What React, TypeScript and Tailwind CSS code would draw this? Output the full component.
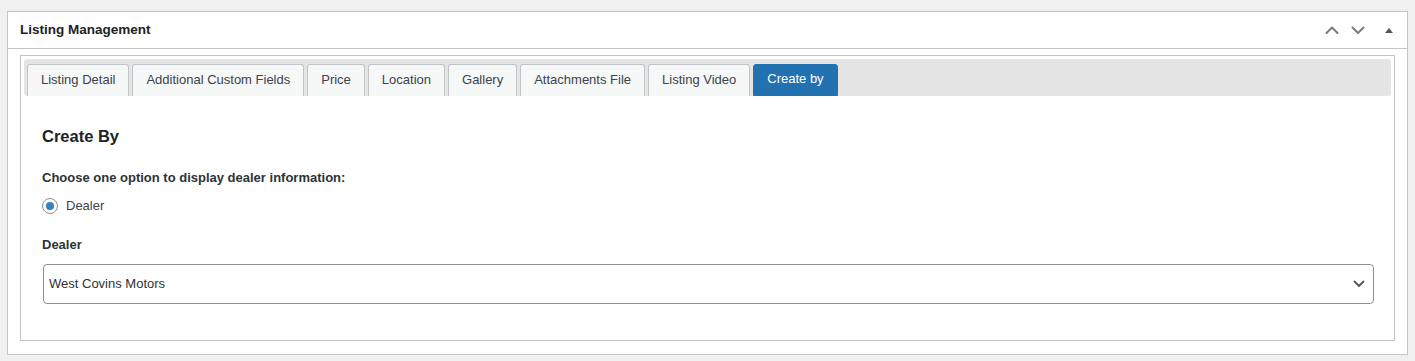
import { useState } from "react"

const tabs = [
    "Listing Detail",
    "Additional Custom Fields",
    "Price",
    "Location",
    "Gallery",
    "Attachments File",
    "Listing Video",
    "Create by",
]

function Chevron({ up }: { readonly up?: boolean }) {
    return (
        <svg width="14" height="10" viewBox="0 0 14 10" fill="none">
            <path
                d={up ? "M1.5 8 L7 2.5 L12.5 8" : "M1.5 2.5 L7 8 L12.5 2.5"}
                stroke="#787c82"
                strokeWidth="2"
                strokeLinecap="round"
                strokeLinejoin="round"
            />
        </svg>
    )
}

export default function App() {
    const [active, setActive] = useState("Create by")

    return (
        <div className="w-[1415px] h-[361px] bg-[#f0f0f1] pt-[11px] px-[7px] font-['Liberation_Sans',Arial,sans-serif] text-[#1d2327]">
            <div className="h-[344px] bg-white border border-[#c3c4c7]">
                <div className="h-[37px] border-b border-[#c3c4c7] flex items-center justify-between pl-[12px] pr-[13px]">
                    <h2 className="text-[13.5px] font-bold text-[#1d2327]">Listing Management</h2>
                    <div className="flex items-center">
                        <button className="w-[26px] flex justify-center"><Chevron up /></button>
                        <button className="w-[26px] flex justify-center"><Chevron /></button>
                        <button className="w-[23px] flex justify-end">
                            <svg width="10" height="8" viewBox="0 0 10 8">
                                <path d="M1 7 L5 2 L9 7 Z" fill="#50575e" />
                            </svg>
                        </button>
                    </div>
                </div>
                <div className="pt-[6px] pl-[12px] pr-[12px]">
                    <div className="h-[286px] border border-[#c3c4c7] p-[3px]">
                        <div className="h-[37px] bg-[#e5e5e5] rounded-[3px] pl-[3px] pt-[5px] flex items-end gap-[3px]">
                            {tabs.map((tab) => {
                                const isActive = tab === active
                                return (
                                    <button
                                        key={tab}
                                        onClick={() => setActive(tab)}
                                        className={
                                            isActive
                                                ? "h-[32px] pb-[2px] px-[13px] text-[13px] rounded-t-[3px] border border-[#2271b1] bg-[#2271b1] text-white"
                                                : "h-[32px] pb-[2px] px-[13px] text-[13px] rounded-t-[3px] border border-b-0 border-[#c3c4c7] bg-[#f6f7f7] text-[#3c434a]"
                                        }
                                    >
                                        {tab}
                                    </button>
                                )
                            })}
                        </div>
                        <div className="pl-[18px] pr-[17px]">
                            <h3 className="mt-[30px] text-[16.5px] leading-[20px] font-bold text-[#1d2327]">Create By</h3>
                            <p className="mt-[22px] text-[13px] leading-[20px] font-bold text-[#2c3338]">
                                Choose one option to display dealer information:
                            </p>
                            <label className="mt-[8px] flex items-center gap-[8px] h-[20px] text-[13px] text-[#3c434a]">
                                <span className="w-[16px] h-[16px] rounded-full border border-[#8c8f94] flex items-center justify-center">
                                    <span className="w-[8px] h-[8px] rounded-full bg-[#3582c4]"></span>
                                </span>
                                Dealer
                            </label>
                            <p className="mt-[19px] text-[13px] leading-[20px] font-bold text-[#2c3338]">Dealer</p>
                            <div className="mt-[9px] ml-[1px] h-[40px] border border-[#8c8f94] rounded-[4px] flex items-center justify-between pl-[5px] pr-[8px]">
                                <span className="text-[13px] text-[#2c3338]">West Covins Motors</span>
                                <svg width="12" height="8" viewBox="0 0 12 8" fill="none">
                                    <path d="M1.5 1.5 L6 6 L10.5 1.5" stroke="#50575e" strokeWidth="1.8" strokeLinecap="round" strokeLinejoin="round" />
                                </svg>
                            </div>
                        </div>
                    </div>
                </div>
            </div>
        </div>
    )
}
